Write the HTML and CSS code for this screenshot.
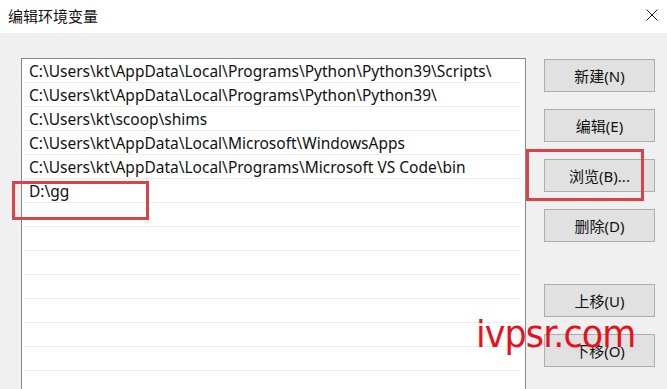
FILE: index.html
```html
<!DOCTYPE html>
<html lang="zh-CN">
<head>
    <meta charset="UTF-8">
    <title>编辑环境变量</title>
    <link rel="stylesheet" href="styles.css">
</head>
<body>

<div class="dialog">
    <div class="titlebar">
        <span class="title">编辑环境变量</span>
        <svg class="close" width="12" height="12" viewBox="0 0 12 12">
            <path d="M0.5 0.5 L11.5 11.5 M11.5 0.5 L0.5 11.5" stroke="#222" stroke-width="1" fill="none"/>
        </svg>
    </div>

    <div class="content">
        <div class="path-list">
            <div class="row">C:\Users\kt\AppData\Local\Programs\Python\Python39\Scripts\</div>
            <div class="row">C:\Users\kt\AppData\Local\Programs\Python\Python39\</div>
            <div class="row">C:\Users\kt\scoop\shims</div>
            <div class="row">C:\Users\kt\AppData\Local\Microsoft\WindowsApps</div>
            <div class="row">C:\Users\kt\AppData\Local\Programs\Microsoft VS Code\bin</div>
            <div class="row">D:\gg</div>
            <div class="row"></div>
            <div class="row"></div>
            <div class="row"></div>
            <div class="row"></div>
            <div class="row"></div>
            <div class="row"></div>
            <div class="row"></div>
            <div class="row"></div>
        </div>

        <div class="buttons">
            <button class="btn">新建(N)</button>
            <button class="btn">编辑(E)</button>
            <button class="btn">浏览(B)...</button>
            <button class="btn">删除(D)</button>
            <button class="btn btn-gap">上移(U)</button>
            <button class="btn">下移(O)</button>
        </div>
    </div>

    <!-- annotations drawn over the screenshot -->
    <div class="mark mark-row"></div>
    <div class="mark mark-browse"></div>
    <div class="watermark">ivpsr.com</div>
</div>

</body>
</html>
```

FILE: styles.css
```css
body {
    margin: 0;
    padding: 0;
    background-color: #f0f0f0;
    font-family: "Noto Sans", "Noto Sans CJK SC", sans-serif;
    color: #000;
}
.dialog {
    position: relative;
    width: 667px;
    height: 389px;
    overflow: hidden;
    background-color: #f0f0f0;
}
.titlebar {
    height: 33px;
    background-color: white;
    display: flex;
    align-items: center;
    justify-content: space-between;
    padding: 0 9px 0 8px;
    box-sizing: border-box;
}
.title {
    font-family: "Noto Sans CJK SC", sans-serif;
    font-size: 15px;
    color: #111;
    margin-top: -2px;
}
.close {
    display: block;
    margin-bottom: 3px;
}
.content {
    display: flex;
    align-items: flex-start;
    padding: 25px 0 0 21px;
}
.path-list {
    width: 505px;
    height: 360px;
    box-sizing: border-box;
    background-color: white;
    border: 1px solid #828790;
    border-bottom: none;
    padding: 0 4px 0 2px;
}
.row {
    height: 21px;
    padding-top: 2px;
    padding-left: 5px;
    border-bottom: 1px solid #ededed;
    font-size: 15.5px;
    line-height: 21px;
    white-space: nowrap;
    color: #111;
}
.buttons {
    display: flex;
    flex-direction: column;
    gap: 17px;
    margin-left: 18px;
    padding-top: 1px;
}
.btn {
    width: 111px;
    height: 33px;
    background-color: #e1e1e1;
    border: 1px solid #adadad;
    font-family: "Noto Sans", "Noto Sans CJK SC", sans-serif;
    font-size: 15px;
    color: #111;
    padding: 0;
}
.btn-gap {
    margin-top: 25px;
}
.mark {
    position: absolute;
    border: 3px solid #d9444b;
    box-sizing: border-box;
}
.mark-row {
    left: 12px;
    top: 181px;
    width: 137px;
    height: 39px;
}
.mark-browse {
    left: 526px;
    top: 149px;
    width: 118px;
    height: 52px;
}
.watermark {
    position: absolute;
    left: 476px;
    top: 309px;
    font-family: "DejaVu Sans", sans-serif;
    font-size: 38px;
    line-height: 50px;
    color: #e8111b;
    letter-spacing: -1px;
    transform: scaleX(0.92);
    transform-origin: left top;
}
```
